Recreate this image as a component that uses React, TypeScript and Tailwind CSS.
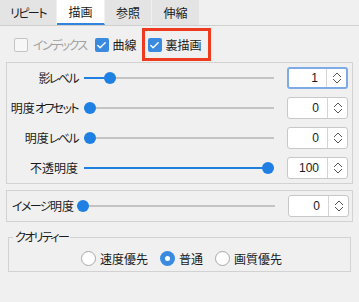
import type { ReactNode } from "react"
import { Check } from "lucide-react"

// katakana runs are set tighter, like the narrow UI font in the shot
const K = ({ children }: { children: ReactNode }) => (
  <span className="tracking-[-1.6px]">{children}</span>
)

const Tab = ({ label, w, active }: { label: ReactNode; w: string; active?: boolean }) => (
  <div
    className={`${w} h-full flex items-center justify-center border-r border-[#f0f0f0] ${
      active ? "bg-white border-b-2 border-b-[#2f84dc]" : "bg-[#e4e4e4]"
    }`}
  >
    {label}
  </div>
)

const Box = ({ checked, disabled }: { checked?: boolean; disabled?: boolean }) =>
  checked ? (
    <div className="w-[14px] h-[14px] rounded-[2px] bg-[#3a8be0] flex items-center justify-center">
      <Check className="w-[11px] h-[11px] text-white" strokeWidth={3} />
    </div>
  ) : (
    <div
      className={`w-[14px] h-[14px] rounded-[2px] border bg-[#f7f7f7] ${
        disabled ? "border-[#c4c4c4]" : "border-[#808080]"
      }`}
    />
  )

const Slider = ({ pos, start }: { pos: number; start: number }) => {
  const width = 274 - start
  return (
    <div className="relative h-[12px] shrink-0" style={{ width: width }}>
      <div className="absolute left-0 right-0 top-[5px] h-[2px] bg-[#c4c4c4]" />
      <div className="absolute left-0 top-[5px] h-[2px] bg-[#1f7fe0]" style={{ width: pos }} />
      <div
        className="absolute top-0 w-[12px] h-[12px] rounded-full bg-[#1f80e4]"
        style={{ left: pos - 6 }}
      />
    </div>
  )
}

const Spin = ({ value, focused }: { value: string; focused?: boolean }) => (
  <div
    className={`flex w-[61px] h-[22px] bg-white rounded-[3px] ${
      focused ? "border-2 border-[#7eaae6]" : "border border-[#c8c8c8]"
    }`}
  >
    <div className="flex-1 flex items-center justify-end pr-[8px] font-['Liberation_Sans',sans-serif] text-[12px]">
      {value}
    </div>
    <div className="w-[20px] border-l border-[#d4d4d4] flex items-center justify-center">
      <svg width="10" height="14" viewBox="0 0 10 14" fill="none" stroke="#555" strokeWidth="1">
        <path d="M1 6 L5 2 L9 6 M1 8 L5 12 L9 8" />
      </svg>
    </div>
  </div>
)

const Row = ({
  label,
  pos,
  value,
  focused,
}: {
  label: ReactNode
  pos: number
  value: string
  focused?: boolean
}) => (
  <div className="h-[30px] flex items-center">
    <div className="w-[72px] text-right pr-[1px]">{label}</div>
    <div className="ml-[5px]">
      <Slider pos={pos} start={84} />
    </div>
    <div className="ml-[13px]">
      <Spin value={value} focused={focused} />
    </div>
  </div>
)

const Radio = ({ label, checked }: { label: string; checked?: boolean }) => (
  <div className="flex items-center gap-[4px]">
    {checked ? (
      <div className="w-[15px] h-[15px] rounded-full bg-[#3a8be0] flex items-center justify-center">
        <div className="w-[5px] h-[5px] rounded-full bg-white" />
      </div>
    ) : (
      <div className="w-[15px] h-[15px] rounded-full border border-[#a8a8a8] bg-white" />
    )}
    <span>{label}</span>
  </div>
)

export default function App() {
  return (
    <div className="w-[359px] h-[302px] bg-[#f0f0f0] text-[12px] leading-none text-[#1a1a1a] font-['Noto_Sans_CJK_JP',sans-serif] [font-feature-settings:'palt'] whitespace-nowrap overflow-hidden">
      <div className="flex h-[26px] border-b border-[#d0d0d0]">
        <Tab label={<K>リピート</K>} w="w-[57px]" />
        <Tab label="描画" w="w-[48px]" active />
        <Tab label="参照" w="w-[47px]" />
        <Tab label="伸縮" w="w-[48px]" />
      </div>

      <div className="h-[36px] pt-[2px] flex items-center pl-[14px]">
        <div className="flex items-center gap-[5px] text-[#a0a0a0]">
          <Box disabled />
          <K>インデックス</K>
        </div>
        <div className="flex items-center gap-[4px] ml-[8px]">
          <Box checked />
          <span>曲線</span>
        </div>
        <div className="relative flex items-center gap-[4px] ml-[11px] h-[14px]">
          <Box checked />
          <span>裏描画</span>
          <div className="absolute -left-[6px] -right-[9px] -top-[10px] -bottom-[9px] border-[3px] border-[#ee3a1e]" />
        </div>
      </div>

      <div className="mx-[6px] border border-[#d2d2d2]">
        <Row label={<K>影レベル</K>} pos={26} value="1" focused />
        <Row
          label={
            <>
              明度<K>オフセット</K>
            </>
          }
          pos={6}
          value="0"
        />
        <Row
          label={
            <>
              明度<K>レベル</K>
            </>
          }
          pos={6}
          value="0"
        />
        <Row label="不透明度" pos={184} value="100" />
      </div>

      <div className="mx-[6px] mt-[6px] border border-[#d2d2d2] h-[32px] flex items-center">
        <div className="pl-[5px] w-[70px]">
          <K>イメージ</K>明度
        </div>
        <Slider pos={6} start={76} />
        <div className="ml-[13px]">
          <Spin value="0" />
        </div>
      </div>

      <fieldset className="mx-[8px] mt-[9px] border border-[#d2d2d2] h-[41px] px-[4px] pb-[6px]">
        <legend className="px-[2px]">
          <K>クオリティー</K>
        </legend>
        <div className="flex items-center gap-[12px] pl-[68px] pt-[8px]">
          <Radio label="速度優先" />
          <Radio label="普通" checked />
          <Radio label="画質優先" />
        </div>
      </fieldset>
    </div>
  )
}
